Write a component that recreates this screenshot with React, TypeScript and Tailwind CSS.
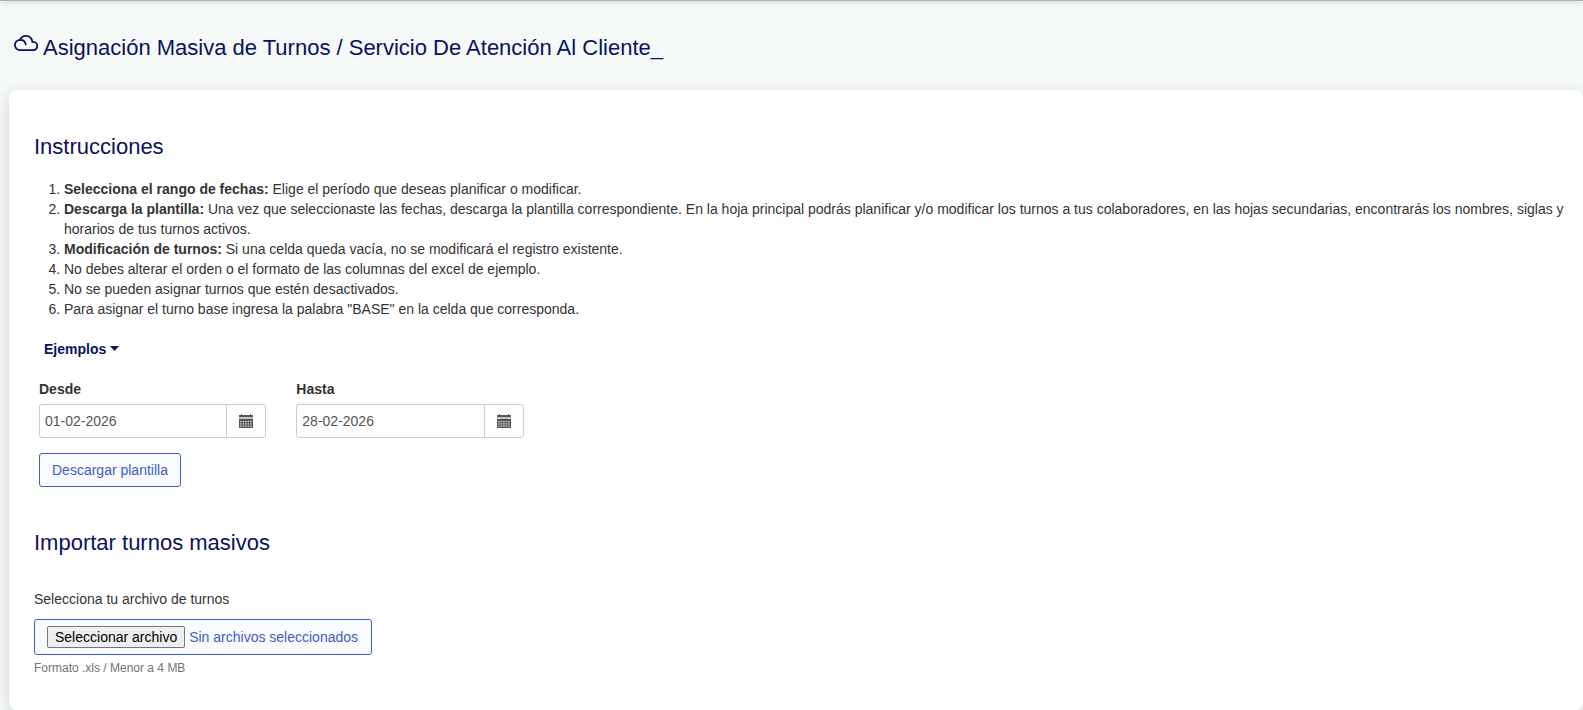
import { useRef } from "react";

const instructions = [
  { title: "Selecciona el rango de fechas:", text: "Elige el período que deseas planificar o modificar." },
  {
    title: "Descarga la plantilla:",
    text: "Una vez que seleccionaste las fechas, descarga la plantilla correspondiente. En la hoja principal podrás planificar y/o modificar los turnos a tus colaboradores, en las hojas secundarias, encontrarás los nombres, siglas y horarios de tus turnos activos.",
  },
  { title: "Modificación de turnos:", text: "Si una celda queda vacía, no se modificará el registro existente." },
  { text: "No debes alterar el orden o el formato de las columnas del excel de ejemplo." },
  { text: "No se pueden asignar turnos que estén desactivados." },
  { text: 'Para asignar el turno base ingresa la palabra "BASE" en la celda que corresponda.' },
];

function CloudIcon() {
  return (
    <svg width="24" height="16" viewBox="0 0 24 16" fill="none" stroke="currentColor" strokeWidth="1.8" strokeLinecap="round">
      <path d="M5.8 15.1H19a4.1 4.1 0 0 0 .3-8.2h-.9C17.8 3.4 15.3.9 12 .9 9.3.9 7 2.5 6 4.9 3.2 4.9.9 7.2.9 10s2.2 5.1 4.9 5.1Z" />
      <path d="M6 4.9c3.2 0 5.3 1.8 5.7 4.5" />
    </svg>
  );
}

function CalendarIcon() {
  return (
    <svg width="14" height="14" viewBox="0 0 14 14" fill="#555">
      <path d="M0 1h2V0h1v1h8V0h1v1h2v2H0z" />
      <path fill="#c4c4c4" d="M0 3h14v2H0z" />
      <path d="M0 5h14v9H0z" />
      <g fill="#ddd">
        {[7, 9.3, 11.6].map((y) =>
          [1.2, 3.7, 6.2, 8.7, 11.2].map((x) => <rect key={`${x}-${y}`} x={x} y={y} width="1.5" height="1.2" />)
        )}
      </g>
    </svg>
  );
}

function DateField({ id, label, value }: { id: string; label: string; value: string }) {
  return (
    <div className="px-[15px]">
      <label htmlFor={id} className="block mb-[5px] font-bold">
        {label}
      </label>
      <div className="flex h-[34px] border border-[#ccc] rounded-[3px] text-[#555]">
        <input id={id} type="text" defaultValue={value} className="min-w-0 flex-1 px-[5px] outline-none" />
        <button type="button" aria-label={`Abrir calendario ${label}`} className="w-[39px] flex items-center justify-center border-l border-[#ccc]">
          <CalendarIcon />
        </button>
      </div>
    </div>
  );
}

export default function App() {
  const fileRef = useRef<HTMLInputElement>(null);

  return (
    <div className="min-h-screen bg-[#f5f9f8] font-['Liberation_Sans',Arial,sans-serif] text-sm leading-5 text-[#333]">
      {/* Navbar edge */}
      <div className="h-px bg-[#b0b0b0] shadow-[0_1px_4px_rgba(0,0,0,0.4)]"></div>

      <header className="flex items-start pt-[34px] pl-[14px] text-[#09125f]">
        <CloudIcon />
        <h1 className="pl-[5px] text-[22px] leading-[26px]">Asignación Masiva de Turnos / Servicio De Atención Al Cliente_</h1>
      </header>

      <main className="mt-[29px] ml-[9px] px-[15px] pt-[44px] pb-[34px] bg-white rounded-lg shadow-[0_4px_16px_rgba(0,0,0,0.15)]">
        <h2 className="px-[10px] mb-[19px] text-[22px] leading-[26px] text-[#09125f]">Instrucciones</h2>

        <ol className="list-decimal pl-10">
          {instructions.map((item) => (
            <li key={item.text}>
              {item.title && <strong>{item.title} </strong>}
              {item.text}
            </li>
          ))}
        </ol>

        <button type="button" className="mt-5 ml-5 flex items-center gap-1 font-bold text-[#09125f]">
          Ejemplos
          <svg width="9" height="6" viewBox="0 0 9 6" fill="currentColor">
            <path d="M0 0h9L4.5 5z" />
          </svg>
        </button>

        {/* Date range */}
        <div className="mt-5 grid grid-cols-2 md:grid-cols-4 lg:grid-cols-6">
          <DateField id="desde" label="Desde" value="01-02-2026" />
          <DateField id="hasta" label="Hasta" value="28-02-2026" />
        </div>
        <button type="button" className="mt-[15px] ml-[15px] h-[34px] px-3 border border-[#405ccc] rounded-[3px] bg-[#fafbff] text-[#405ccc]">
          Descargar plantilla
        </button>

        {/* Import */}
        <section className="px-[10px]">
          <h2 className="mt-[43px] mb-[33px] text-[22px] leading-[26px] text-[#09125f]">Importar turnos masivos</h2>
          <label htmlFor="archivo" className="block mb-[10px]">
            Selecciona tu archivo de turnos
          </label>
          <div className="w-fit h-9 pl-3 pr-[13px] flex items-center gap-1 border border-[#405ccc] rounded-[3px] bg-[#fafbff] text-[#405ccc]">
            <input ref={fileRef} id="archivo" type="file" accept=".xls" className="sr-only" />
            <button
              type="button"
              onClick={() => fileRef.current?.click()}
              className="h-[22px] px-[7px] border border-[#767676] rounded-xs bg-[#efefef] text-black"
            >
              Seleccionar archivo
            </button>
            <span>Sin archivos seleccionados</span>
          </div>
          <p className="mt-[5px] text-xs leading-4 text-[#737373]">Formato .xls / Menor a 4 MB</p>
        </section>
      </main>
    </div>
  );
}
